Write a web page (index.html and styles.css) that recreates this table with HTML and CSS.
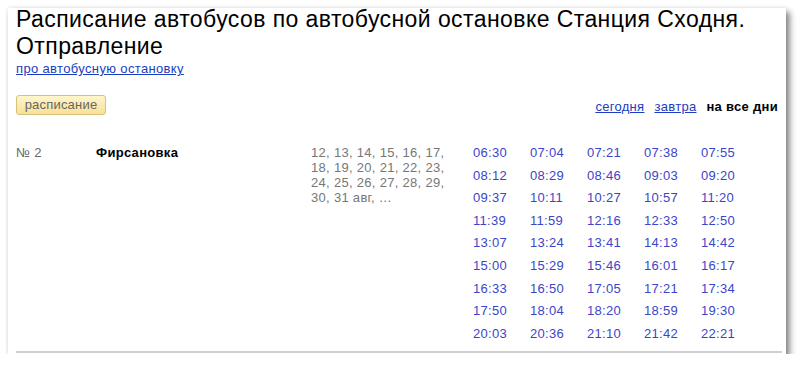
FILE: index.html
```html
<!DOCTYPE html>
<html lang="ru">
<head>
<meta charset="utf-8">
<title>Расписание автобусов</title>
<link rel="stylesheet" href="styles.css">
</head>
<body>
<div class="card">
  <h1 class="title">Расписание автобусов по автобусной остановке Станция Сходня. Отправление</h1>
  <a class="about" href="#">про автобусную остановку</a>
  <div class="toolbar">
    <span class="tab">расписание</span>
    <div class="days">
      <a href="#">сегодня</a>
      <a href="#">завтра</a>
      <b>на все дни</b>
    </div>
  </div>
  <div class="route">
    <div class="num">№ 2</div>
    <div class="dest">Фирсановка</div>
    <div class="dates">12, 13, 14, 15, 16, 17, 18, 19, 20, 21, 22, 23, 24, 25, 26, 27, 28, 29, 30, 31 авг, …</div>
    <div class="times">
      <span>06:30</span><span>07:04</span><span>07:21</span><span>07:38</span><span>07:55</span>
      <span>08:12</span><span>08:29</span><span>08:46</span><span>09:03</span><span>09:20</span>
      <span>09:37</span><span>10:11</span><span>10:27</span><span>10:57</span><span>11:20</span>
      <span>11:39</span><span>11:59</span><span>12:16</span><span>12:33</span><span>12:50</span>
      <span>13:07</span><span>13:24</span><span>13:41</span><span>14:13</span><span>14:42</span>
      <span>15:00</span><span>15:29</span><span>15:46</span><span>16:01</span><span>16:17</span>
      <span>16:33</span><span>16:50</span><span>17:05</span><span>17:21</span><span>17:34</span>
      <span>17:50</span><span>18:04</span><span>18:20</span><span>18:59</span><span>19:30</span>
      <span>20:03</span><span>20:36</span><span>21:10</span><span>21:42</span><span>22:21</span>
    </div>
  </div>
  <div class="rule"></div>
</div>
</body>
</html>
```

FILE: styles.css
```css
html, body {
  margin: 0;
  padding: 0;
  background: #ffffff;
}
body {
  padding: 8px 0 0 8px;
  font-family: "Liberation Sans", Arial, sans-serif;
  font-size: 13px;
  letter-spacing: 0.3px;
  color: #000;
}
.card {
  width: 778px;
  height: 346px;
  box-sizing: border-box;
  background: #fff;
  padding: 0 4px 0 8px;
  box-shadow: 4px 4px 6px rgba(0, 0, 0, 0.45), 0 0 4px rgba(0, 0, 0, 0.12);
  display: flex;
  flex-direction: column;
}
.title {
  margin: -2px 0 0 0;
  font-size: 23px;
  font-weight: normal;
  letter-spacing: 0.42px;
  line-height: 27px;
  color: #000;
}
.about {
  display: block;
  margin-top: 1px;
  color: #1a3dc1;
  line-height: 15px;
  font-size: 13px;
  letter-spacing: 0.35px;
  align-self: flex-start;
}
.toolbar {
  display: flex;
  justify-content: space-between;
  align-items: center;
  margin-top: 19px;
}
.tab {
  display: inline-block;
  box-sizing: border-box;
  width: 90px;
  height: 20px;
  line-height: 18px;
  text-align: center;
  color: #666;
  font-size: 13px;
  letter-spacing: 0.2px;
  border: 1px solid #d8c27a;
  border-radius: 3px;
  background: linear-gradient(#fff6cc, #f8e096);
}
.days {
  display: flex;
  gap: 10px;
  padding-top: 3px;
  padding-right: 4px;
}
.days a {
  color: #1a3dc1;
}
.days b {
  color: #000;
}
.route {
  display: flex;
  margin-top: 30px;
  flex: 1;
}
.num {
  width: 80px;
  color: #666;
  line-height: 15px;
}
.dest {
  width: 215px;
  font-weight: bold;
  line-height: 15px;
}
.dates {
  width: 140px;
  color: #777;
  line-height: 15px;
  margin-right: 22px;
}
.times {
  display: grid;
  grid-template-columns: repeat(5, 57px);
  grid-auto-rows: 22.6px;
  align-content: start;
  color: #3b45c9;
  line-height: 15px;
}
.rule {
  height: 2px;
  background: #cfcfcf;
  margin: 0 0 1px 0;
}
```
